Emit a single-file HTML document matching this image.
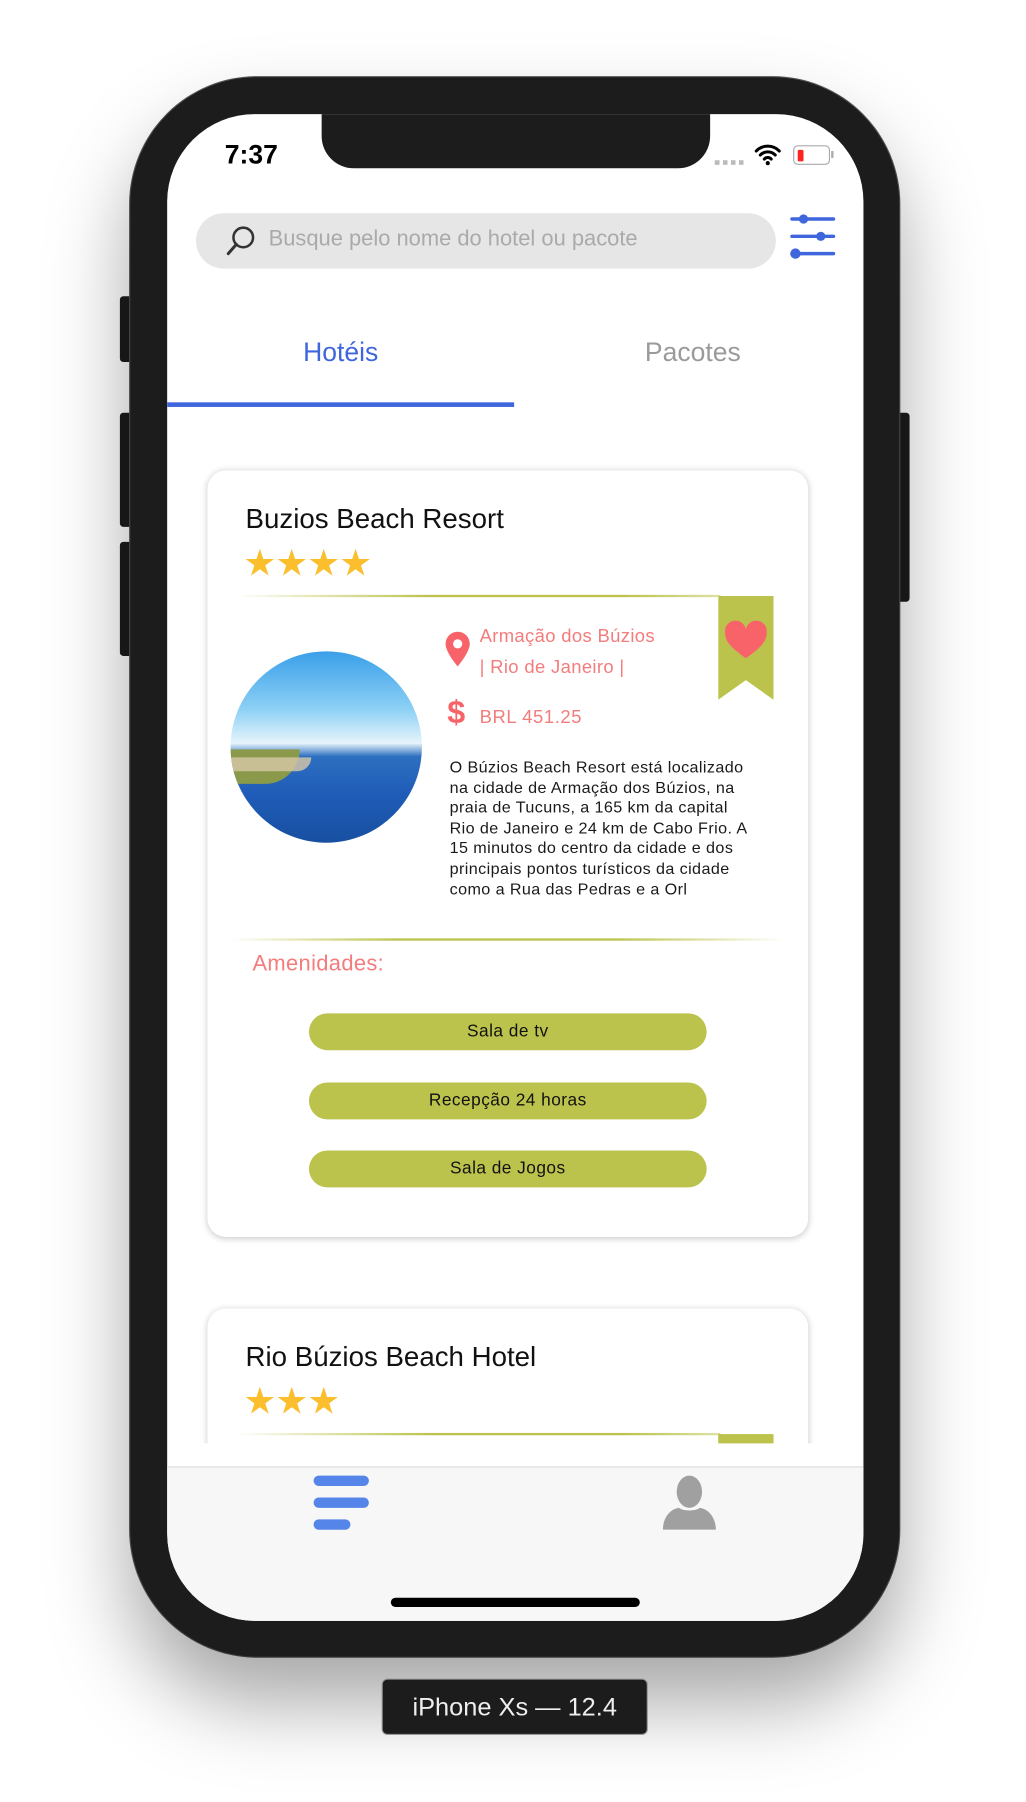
<!DOCTYPE html>
<html><head><meta charset="utf-8"><style>
html,body{margin:0;padding:0;width:1026px;height:1802px;overflow:hidden;background:#fff;font-family:"Liberation Sans",sans-serif}
#w{position:absolute;left:0;top:0;width:890px;height:1563px;transform:scale(1.15281);transform-origin:0 0}
.a{position:absolute}
.phone{left:113px;top:67px;width:667px;height:1370px;background:#1c1c1c;border-radius:110px;box-shadow:0 40px 70px rgba(0,0,0,.35),0 0 0 1px #555}
.btn{background:#1c1c1c;border-radius:3px}
.screen{left:145px;top:99px;width:604px;height:1307px;background:#fff;border-radius:76px;overflow:hidden}
.card{background:#fff;border-radius:16px;box-shadow:0 1px 6px rgba(0,0,0,.22)}
.sal{color:#f47c7c}
.pill{left:88px;width:345px;height:32px;border-radius:16px;background:#bcc34c;text-align:center;line-height:32px;font-size:15px;letter-spacing:.4px;color:#111}
.star{color:#fbbf2e;font-size:32px;letter-spacing:-1px}
.line{height:2px;background:linear-gradient(90deg,rgba(188,195,76,0),#bcc34c 40%,#bcc34c 80%,rgba(188,195,76,.5))}
</style></head><body><div id="w">
<div class="a btn" style="left:104px;top:257px;width:12px;height:57px"></div>
<div class="a btn" style="left:104px;top:358px;width:12px;height:99px"></div>
<div class="a btn" style="left:104px;top:470px;width:12px;height:99px"></div>
<div class="a btn" style="left:777px;top:358px;width:12px;height:164px"></div>
<div class="a phone"></div>
<div class="a screen">
 <div class="a" style="left:134px;top:-10px;width:337px;height:57px;background:#1c1c1c;border-radius:0 0 28px 28px"></div>
 <div class="a" style="left:50px;top:22px;font-size:23px;font-weight:bold;color:#000">7:37</div>
 <div class="a" style="left:475px;top:40px;width:26px;height:4px;background:repeating-linear-gradient(90deg,#bbb 0 4px,transparent 4px 7px)"></div>
 <svg class="a" style="left:509px;top:25px" width="24" height="20" viewBox="0 0 24 20"><path d="M2 7a14 14 0 0 1 20 0M5.5 10.5a9 9 0 0 1 13 0M9 14a4 4 0 0 1 6 0" stroke="#000" stroke-width="2.6" fill="none" stroke-linecap="round"/><circle cx="12" cy="17.5" r="1.8"/></svg>
 <div class="a" style="left:543px;top:27px;width:30px;height:15px;border:1.5px solid #aaa;border-radius:4px"></div>
 <div class="a" style="left:547px;top:31px;width:5px;height:10px;background:#f22;border-radius:1px"></div>
 <div class="a" style="left:576px;top:32px;width:2px;height:6px;background:#aaa"></div>
 <div class="a" style="left:25px;top:86px;width:503px;height:48px;background:#e6e6e6;border-radius:24px"></div>
 <svg class="a" style="left:50px;top:96px" width="28" height="28" viewBox="0 0 28 28"><circle cx="16" cy="11" r="8.5" stroke="#333" stroke-width="2.2" fill="none"/><path d="M10 17 3 25" stroke="#333" stroke-width="2.6" stroke-linecap="round"/></svg>
 <div class="a" style="left:88px;top:98px;font-size:19px;color:#aaa">Busque pelo nome do hotel ou pacote</div>
 <svg class="a" style="left:539px;top:84px" width="42" height="46" viewBox="0 0 42 46"><g stroke="#3f66dd" stroke-width="3" stroke-linecap="round"><path d="M3 7h36M3 22h36M3 37h36"/></g><g fill="#3f66dd"><circle cx="13" cy="7" r="4"/><circle cx="28" cy="22" r="4"/><circle cx="6" cy="37" r="4.5"/></g></svg>
 <div class="a" style="left:0;top:193px;width:301px;text-align:center;font-size:23px;color:#3f66dd">Hotéis</div>
 <div class="a" style="left:301px;top:193px;width:310px;text-align:center;font-size:23px;color:#9a9a9a">Pacotes</div>
 <div class="a" style="left:0;top:250px;width:301px;height:4px;background:#3f66dd"></div>
 <div class="a card" style="left:35px;top:309px;width:521px;height:665px">
  <div class="a" style="left:33px;top:29px;font-size:24px;color:#111">Buzios Beach Resort</div>
  <div class="a star" style="left:31px;top:61px">★★★★</div>
  <div class="a line" style="left:25px;top:108px;width:420px"></div>
  <svg class="a" style="left:443px;top:109px" width="48" height="90" viewBox="0 0 48 90"><path d="M0 0h48v90L24 73 0 90z" fill="#bcc34c"/><path d="M24 54C10 44 6 39 6 32a9 9 0 0 1 18-3 9 9 0 0 1 18 3c0 7-4 12-18 22z" fill="#f76369"/></svg>
  <div class="a" style="left:20px;top:157px;width:166px;height:166px;border-radius:50%;overflow:hidden;background:linear-gradient(180deg,#3a9fe9 0%,#8cd0f5 30%,#e6f4fb 48%,#2d6fc0 55%,#1f5cb8 75%,#1850a0 100%)">
   <div class="a" style="left:0;top:85px;width:60px;height:30px;background:#8b9a4a;border-radius:0 0 40px 0"></div>
   <div class="a" style="left:0;top:92px;width:70px;height:12px;background:#d8c8a8;border-radius:0 0 30px 0;opacity:.8"></div>
  </div>
  <svg class="a" style="left:205px;top:139px" width="24" height="32" viewBox="0 0 24 32"><path d="M12 1a10.5 10.5 0 0 0-10.5 10.5C1.5 19 12 31 12 31s10.5-12 10.5-19.5A10.5 10.5 0 0 0 12 1z" fill="#f76369"/><circle cx="12" cy="11.5" r="4" fill="#fff"/></svg>
  <div class="a sal" style="left:236px;top:131px;font-size:16px;line-height:27px;letter-spacing:.3px">Armação dos Búzios<br>| Rio de Janeiro |</div>
  <div class="a" style="left:208px;top:194px;font-size:28px;font-weight:bold;color:#f76369">$</div>
  <div class="a sal" style="left:236px;top:206px;font-size:16px;letter-spacing:.5px">BRL 451.25</div>
  <div class="a" style="left:210px;top:249px;white-space:nowrap;font-size:14px;letter-spacing:.35px;line-height:17.6px;color:#1a1a1a">O Búzios Beach Resort está localizado<br>na cidade de Armação dos Búzios, na<br>praia de Tucuns, a 165 km da capital<br>Rio de Janeiro e 24 km de Cabo Frio. A<br>15 minutos do centro da cidade e dos<br>principais pontos turísticos da cidade<br>como a Rua das Pedras e a Orl</div>
  <div class="a line" style="left:20px;top:406px;width:480px;height:1.5px;background:linear-gradient(90deg,rgba(188,195,76,0),#bcc34c 30%,#bcc34c 70%,rgba(188,195,76,0))"></div>
  <div class="a sal" style="left:39px;top:418px;font-size:19px;letter-spacing:.3px">Amenidades:</div>
  <div class="a pill" style="top:471px">Sala de tv</div>
  <div class="a pill" style="top:531px">Recepção 24 horas</div>
  <div class="a pill" style="top:590px">Sala de Jogos</div>
 </div>
 <div class="a" style="left:0;top:1020px;width:604px;height:133px;overflow:hidden">
  <div class="a card" style="left:35px;top:16px;width:521px;height:300px">
   <div class="a" style="left:33px;top:29px;font-size:24px;color:#111">Rio Búzios Beach Hotel</div>
   <div class="a star" style="left:31px;top:61px">★★★</div>
   <div class="a line" style="left:25px;top:108px;width:420px"></div>
   <div class="a" style="left:443px;top:109px;width:48px;height:40px;background:#bcc34c"></div>
  </div>
 </div>
 <div class="a" style="left:0;top:1173px;width:604px;height:140px;background:#f7f7f7;border-top:1.5px solid #ddd"></div>
 <div class="a" style="left:127px;top:1181px;width:48px;height:9px;background:#5585e8;border-radius:5px"></div>
 <div class="a" style="left:127px;top:1200px;width:48px;height:9px;background:#5585e8;border-radius:5px"></div>
 <div class="a" style="left:127px;top:1219px;width:32px;height:9px;background:#5585e8;border-radius:5px"></div>
 <svg class="a" style="left:429px;top:1180px" width="48" height="48" viewBox="0 0 48 48"><ellipse cx="24" cy="15" rx="11" ry="14" fill="#a0a0a0"/><path d="M1 48c0-10 6-18 14-19 4 3 14 3 18 0 8 1 14 9 14 19z" fill="#a0a0a0"/></svg>
 <div class="a" style="left:194px;top:1287px;width:216px;height:8px;background:#000;border-radius:4px"></div>
</div>
<div class="a" style="left:331px;top:1456px;width:229px;height:47px;background:#1c1c1c;border:1px solid #999;border-radius:5px;color:#eee;font-size:22px;text-align:center;line-height:47px">iPhone Xs — 12.4</div>
</div></body></html>
